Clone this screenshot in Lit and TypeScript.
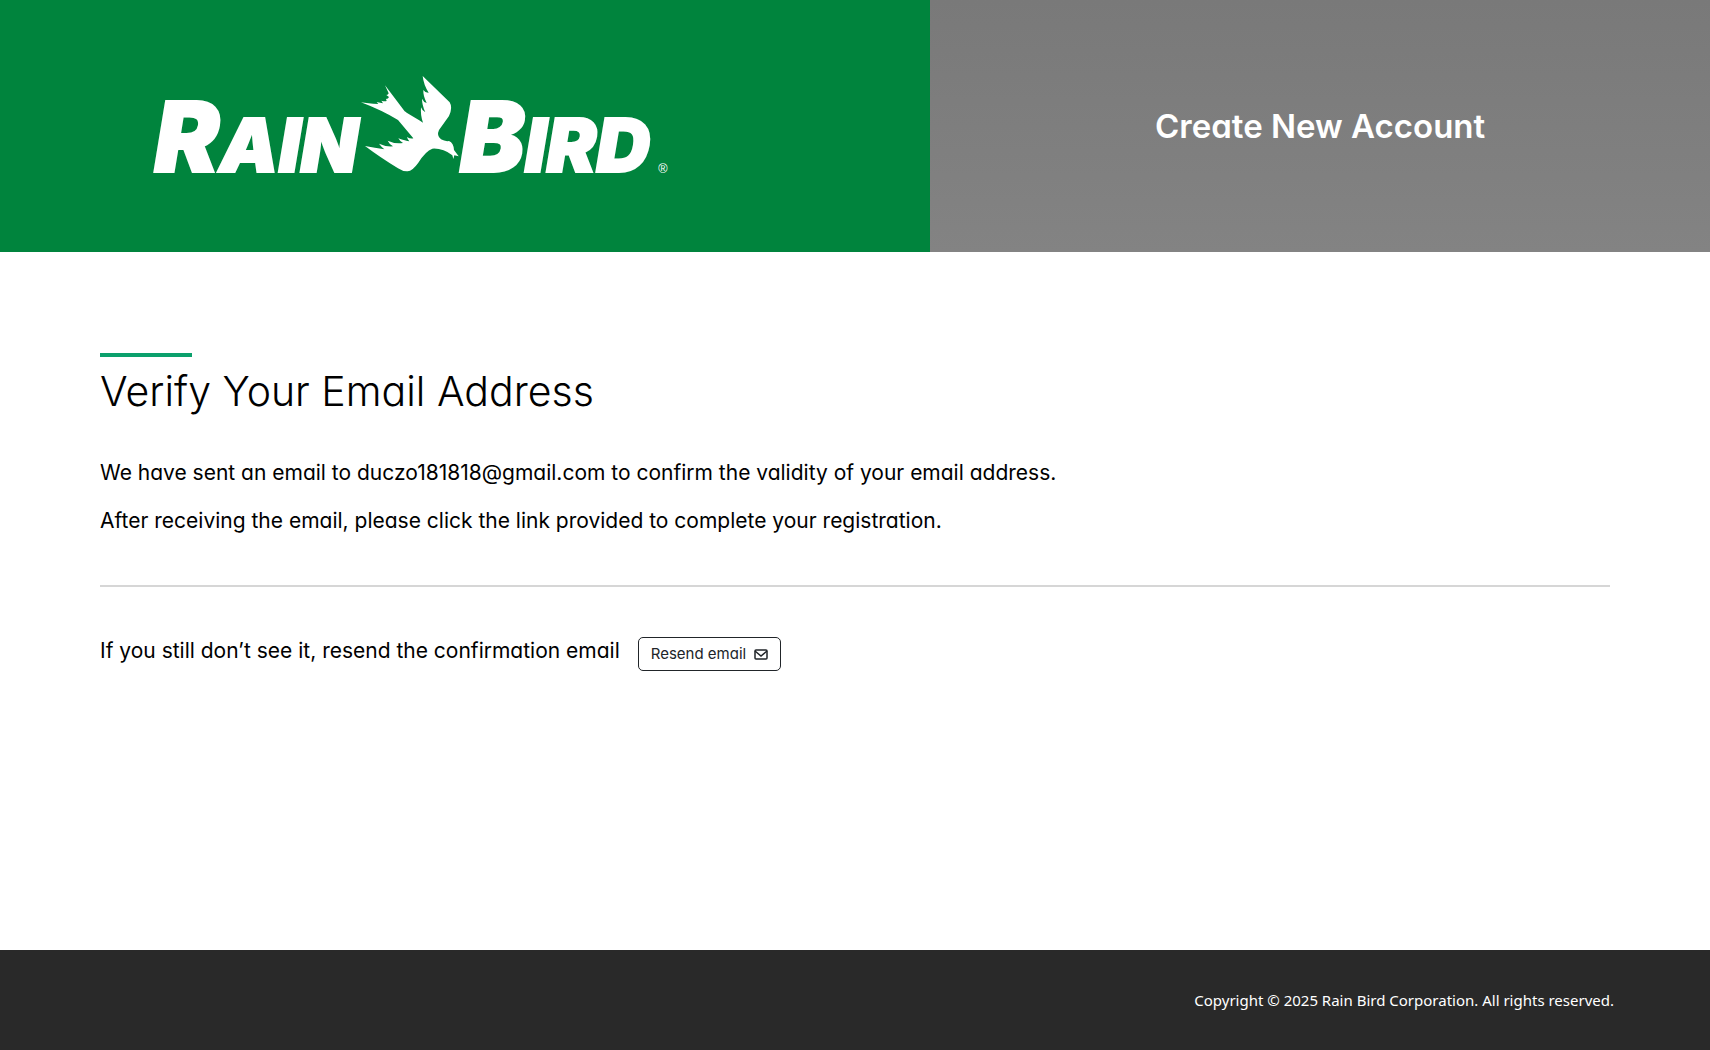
import { LitElement, html, css, svg } from "lit";
import { customElement, property } from "lit/decorators.js";

const bird = svg`<path class="mark" d="M706 31 L765 109 Q772 115 820 143 Q812 122 814 97 Q818 108 827 112 Q817 90 817 71 Q822 82 831 84 Q820 62 821 45 Q827 54 837 53 Q822 30 819 3 L900 82 Q910 98 898 123 L868 165 Q860 182 874 193 Q886 200 898 198 Q912 204 913 225 L927 244 L914 241 L911 252 L908 241 Q880 219 848 221 Q828 228 806 263 Q788 288 774 289 Q760 290 745 280 Q690 246 646 213 Q676 218 704 223 Q694 214 688 206 Q710 216 730 214 Q718 206 714 197 Q738 208 760 204 Q750 198 746 190 Q768 198 779 199 Q774 194 772 186 Q782 192 791 190 L745 135 Q695 105 634 82 Q654 86 686 87 L681 81 Q692 84 700 85 L695 77 Q704 80 711 78 L709 72 Q716 72 718 66 L710 60 Q716 60 717 55 Z"/>`;

@customElement("brand-logo")
class BrandLogo extends LitElement {
  static styles = css`
    :host { display: block; }
    .logo { display: block; width: 100%; height: auto; fill: #fff; overflow: visible; }
    .word { font-family: Inter, "Liberation Sans", sans-serif; font-weight: 900; font-style: italic; stroke: #fff; stroke-width: 6px; }
    .cap { font-size: 292px; }
    .small { font-size: 224px; }
    .reg { font-family: "Liberation Sans", sans-serif; font-size: 38px; }
  `;
  render() {
    return html`<svg class="logo" viewBox="-2 3 1560 300" role="img" aria-label="Rain Bird">
      <text class="word" x="14" y="290"><tspan class="cap">R</tspan><tspan class="small">AIN</tspan></text>
      ${bird}
      <text class="word" x="930" y="290"><tspan class="cap">B</tspan><tspan class="small">IRD</tspan></text>
      <text class="reg" x="1526" y="294">®</text>
    </svg>`;
  }
}

@customElement("app-root")
class AppRoot extends LitElement {
  @property() email = "duczo181818@gmail.com";

  static styles = css`
    :host {
      display: flex;
      flex-direction: column;
      min-height: 100vh;
      background: #fff;
      color: #000;
      font-family: Inter, "Open Sans", sans-serif;
      font-feature-settings: "cv11";
      font-size: 21px;
      line-height: 32px;
    }
    .header { display: grid; grid-template-columns: 54.4% 1fr; min-height: 252px; }
    .brand { display: flex; align-items: center; background: #00843d; padding: 0 16%; }
    .brand brand-logo { width: 100%; max-width: 520px; }
    .banner {
      display: flex; align-items: center; justify-content: center;
      background: linear-gradient(#797979, #838383); color: #fff;
    }
    .banner-title { margin: 0; font-size: 33px; line-height: 48px; font-weight: 600; }
    .main { flex: 1; padding: 101px 100px 64px; }
    .accent { width: 92px; height: 4px; background: #0ba06c; }
    .title { margin: 4px 0 36px; font-size: 41px; line-height: 60px; font-weight: 300; }
    .text { margin: 0 0 16px; }
    .rule { margin: 48px 0; border: 0; border-top: 2px solid #d6d6d6; }
    .resend { display: flex; align-items: flex-start; flex-wrap: wrap; gap: 18px; }
    .resend .text { margin: 0; }
    .button {
      display: flex; align-items: center; gap: 8px;
      height: 34px; margin-top: 2px; padding: 0 12px;
      border: 1px solid #212529; border-radius: 5px; background: #fff; color: #212529;
      font: inherit; font-feature-settings: inherit; font-size: 15px; line-height: 20px; cursor: pointer;
    }
    .mail { width: 14px; height: 12px; fill: none; stroke: #212529; stroke-width: 1.5; }
    .footer {
      display: flex; align-items: center; justify-content: flex-end;
      min-height: 100px; padding: 0 96px; background: #292929; color: #fff;
      font-family: "Noto Sans", "Open Sans", sans-serif; font-size: 15px; line-height: 24px;
    }
    .copyright { margin: 0; }
  `;

  render() {
    return html`
      <header class="header">
        <div class="brand"><brand-logo></brand-logo></div>
        <div class="banner"><h1 class="banner-title">Create New Account</h1></div>
      </header>
      <main class="main">
        <div class="accent"></div>
        <h2 class="title">Verify Your Email Address</h2>
        <p class="text">We have sent an email to ${this.email} to confirm the validity of your email address.</p>
        <p class="text">After receiving the email, please click the link provided to complete your registration.</p>
        <hr class="rule" />
        <div class="resend">
          <p class="text">If you still don’t see it, resend the confirmation email</p>
          <button class="button" type="button">
            Resend email
            <svg class="mail" viewBox="0 0 14 12" aria-hidden="true">
              <rect x="1" y="2" width="12" height="9" rx="1" /><path d="M1 3 L7 8 L13 3" />
            </svg>
          </button>
        </div>
      </main>
      <footer class="footer"><p class="copyright">Copyright © 2025 Rain Bird Corporation. All rights reserved.</p></footer>
    `;
  }
}
